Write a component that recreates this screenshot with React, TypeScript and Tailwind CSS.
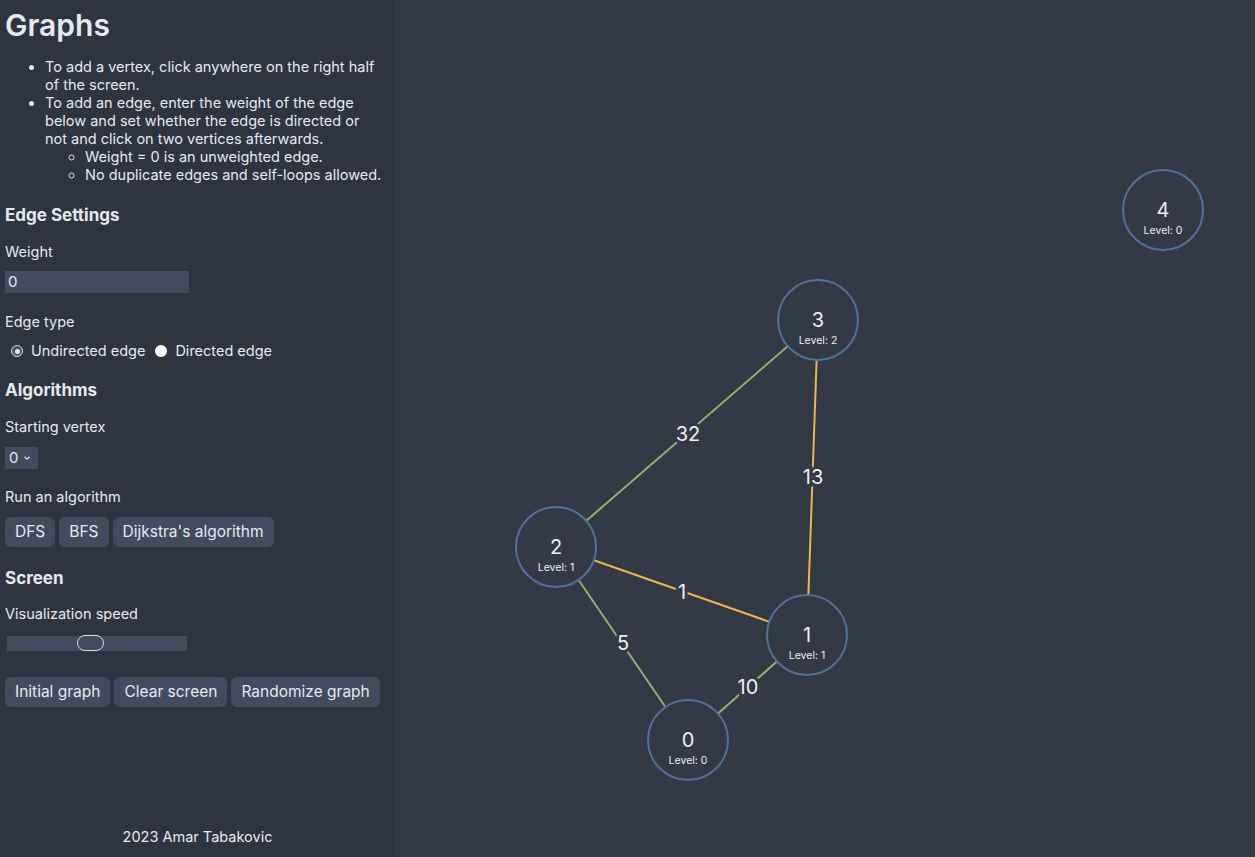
import { useState } from "react";

// Graph data (pane-local coordinates)
const vertices = [
  { id: 0, x: 293, y: 740, level: 0 },
  { id: 1, x: 412, y: 635, level: 1 },
  { id: 2, x: 161, y: 547, level: 1 },
  { id: 3, x: 423, y: 320, level: 2 },
  { id: 4, x: 768, y: 210, level: 0 },
];

const edges = [
  { a: 2, b: 3, w: 32, color: "#90b06f", lx: 293, ly: 434 },
  { a: 3, b: 1, w: 13, color: "#e9b650", lx: 418, ly: 477 },
  { a: 2, b: 1, w: 1, color: "#e9b650", lx: 287, ly: 592 },
  { a: 2, b: 0, w: 5, color: "#90b06f", lx: 228, ly: 643 },
  { a: 1, b: 0, w: 10, color: "#90b06f", lx: 353, ly: 687 },
];

const BG = "#343946";

function Button({ children }: { children: string }) {
  return (
    <button className="h-[30px] px-2.5 rounded-md bg-[#434c5e] text-[15.5px] text-[#e5e9f0]">
      {children}
    </button>
  );
}

function Radio({ checked }: { checked: boolean }) {
  return checked ? (
    <span className="w-3 h-3 rounded-full bg-[#4c566a] border-[1.5px] border-[#d8dee9] flex items-center justify-center">
      <span className="w-[5px] h-[5px] rounded-full bg-[#e5e9f0]" />
    </span>
  ) : (
    <span className="w-3 h-3 rounded-full bg-white" />
  );
}

function App() {
  const [directed, setDirected] = useState(false);

  return (
    <div
      className="flex h-screen w-full overflow-hidden text-[#e5e9f0]"
      style={{ fontFamily: "Inter, 'Noto Sans', sans-serif" }}
    >
      {/* Sidebar */}
      <aside className="w-[395px] shrink-0 h-full bg-[#2e3440] pl-[5px] flex flex-col text-[14.5px]">
        <h1 className="mt-[7px] text-3xl leading-9 font-semibold">Graphs</h1>

        <ul className="mt-[15px] pl-10 pr-[18px] list-disc leading-[18px]">
          <li>To add a vertex, click anywhere on the right half of the screen.</li>
          <li>
            To add an edge, enter the weight of the edge below and set whether the edge is directed or not and click on two vertices afterwards.
            <ul className="pl-10 -mr-[18px] list-[circle]">
              <li>Weight = 0 is an unweighted edge.</li>
              <li>No duplicate edges and self-loops allowed.</li>
            </ul>
          </li>
        </ul>

        <h2 className="mt-[17px] text-[17px] leading-7 font-bold">Edge Settings</h2>
        <p className="mt-[13px] leading-5">Weight</p>
        <div className="mt-[9px] w-[184px] h-[22px] bg-[#434c5e] pl-[3px] flex items-center text-[15px]">0</div>

        <p className="mt-[19px] leading-5">Edge type</p>
        <div className="mt-[9px] h-5 flex items-center pl-[6px]">
          <button className="flex items-center gap-2" onClick={() => setDirected(false)}>
            <Radio checked={!directed} />
            <span>Undirected edge</span>
          </button>
          <button className="flex items-center gap-2 ml-2.5" onClick={() => setDirected(true)}>
            <Radio checked={directed} />
            <span>Directed edge</span>
          </button>
        </div>

        <h2 className="mt-[15px] text-[17px] leading-7 font-bold">Algorithms</h2>
        <p className="mt-[13px] leading-5">Starting vertex</p>
        <div className="mt-[10px] w-[33px] h-[22px] bg-[#434c5e] flex items-center pl-[4px] gap-[5px] text-[15px]">
          <span>0</span>
          <svg width="8" height="6" viewBox="0 0 8 6" fill="none" stroke="#d8dee9" strokeWidth="1.2">
            <path d="M1.5 1.8 L4 4.2 L6.5 1.8" />
          </svg>
        </div>

        <p className="mt-[18px] leading-5">Run an algorithm</p>
        <div className="mt-[10px] flex gap-1">
          <Button>DFS</Button>
          <Button>BFS</Button>
          <Button>Dijkstra's algorithm</Button>
        </div>

        <h2 className="mt-[17px] text-[17px] leading-7 font-bold">Screen</h2>
        <p className="mt-[12px] leading-5">Visualization speed</p>
        <div className="mt-[11px] ml-[2px] w-[180px] h-4 flex items-center relative">
          <div className="w-full h-[15px] bg-[#434c5e]" />
          <div className="absolute left-[70px] top-0 w-[27px] h-4 rounded-full bg-[#434c5e] border border-[#d8dee9]" />
        </div>

        <div className="mt-[26px] flex gap-1">
          <Button>Initial graph</Button>
          <Button>Clear screen</Button>
          <Button>Randomize graph</Button>
        </div>

        <footer className="mt-auto pb-[10px] pr-[5px] leading-5 text-center">2023 Amar Tabakovic</footer>
      </aside>

      {/* Canvas */}
      <main className="flex-1 h-full bg-[#343946]">
        <svg width="100%" height="100%">
          {edges.map((e) => {
            const a = vertices[e.a];
            const b = vertices[e.b];
            return <line key={`${e.a}-${e.b}`} x1={a.x} y1={a.y} x2={b.x} y2={b.y} stroke={e.color} strokeWidth="2" />;
          })}
          {edges.map((e) => (
            <text
              key={`w-${e.a}-${e.b}`}
              x={e.lx}
              y={e.ly}
              textAnchor="middle"
              dominantBaseline="central"
              fontSize="20"
              fill="#eceff4"
              stroke={BG}
              strokeWidth="6"
              paintOrder="stroke"
            >
              {e.w}
            </text>
          ))}
          {vertices.map((v) => (
            <g key={v.id}>
              <circle cx={v.x} cy={v.y} r="40" fill={BG} stroke="#52719a" strokeWidth="2" />
              <text x={v.x} y={v.y} textAnchor="middle" dominantBaseline="central" fontSize="20" fill="#eceff4">
                {v.id}
              </text>
              <text x={v.x} y={v.y + 20} textAnchor="middle" dominantBaseline="central" fontSize="10.5" fill="#eceff4">
                Level: {v.level}
              </text>
            </g>
          ))}
        </svg>
      </main>
    </div>
  );
}

export default App;
